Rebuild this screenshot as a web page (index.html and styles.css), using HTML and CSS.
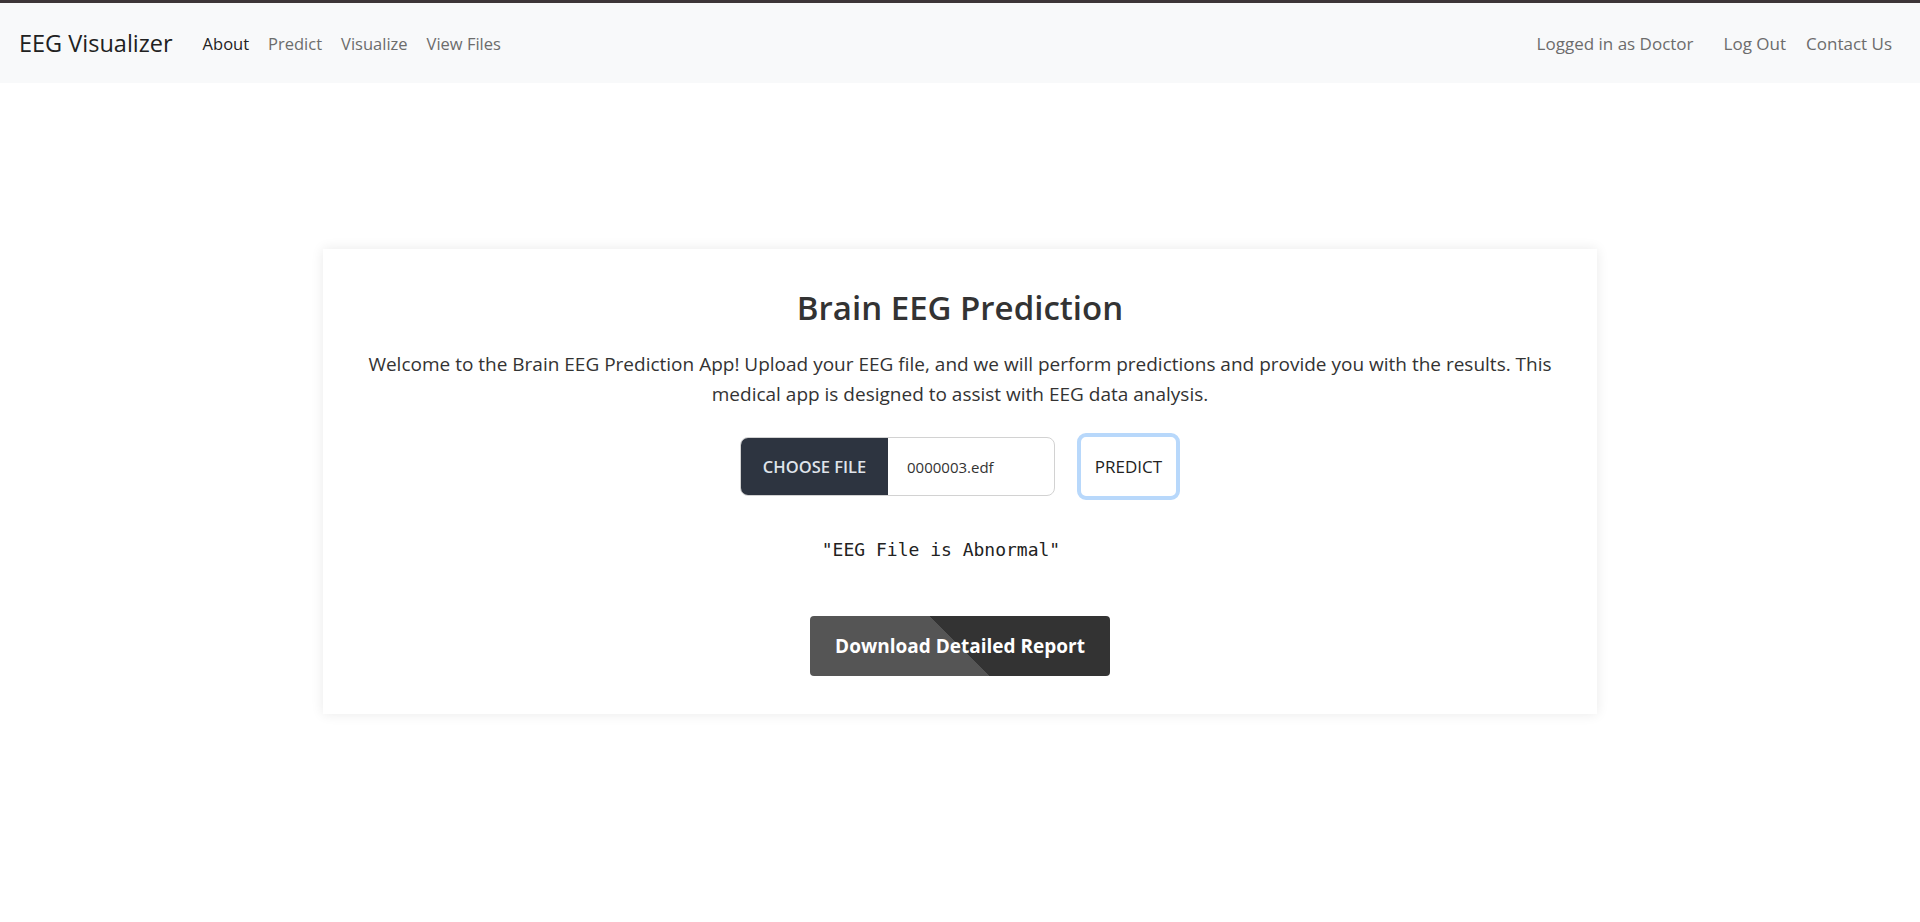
FILE: index.html
```html
<!DOCTYPE html>
<html lang="en">
<head>
<meta charset="utf-8">
<title>EEG Visualizer</title>
<link rel="stylesheet" href="styles.css">
</head>
<body>
<nav class="navbar">
  <div class="nav-left">
    <a class="brand" href="#">EEG Visualizer</a>
    <ul class="nav-links main-links">
      <li><a class="active" href="#">About</a></li>
      <li><a href="#">Predict</a></li>
      <li><a href="#">Visualize</a></li>
      <li><a href="#">View Files</a></li>
    </ul>
  </div>
  <ul class="nav-links nav-right">
    <li><span class="user">Logged in as Doctor</span></li>
    <li><a href="#">Log Out</a></li>
    <li><a href="#">Contact Us</a></li>
  </ul>
</nav>
<main class="main">
  <section class="card">
    <h2 class="title">Brain EEG Prediction</h2>
    <p class="intro">Welcome to the Brain EEG Prediction App! Upload your EEG file, and we will perform predictions and provide you with the results. This medical app is designed to assist with EEG data analysis.</p>
    <form class="upload-row">
      <div class="file-group">
        <span class="file-btn">CHOOSE FILE</span>
        <span class="file-name">0000003.edf</span>
      </div>
      <button type="button" class="predict-btn">PREDICT</button>
    </form>
    <pre class="result">"EEG File is Abnormal"</pre>
    <button type="button" class="download-btn">Download Detailed Report</button>
  </section>
</main>
</body>
</html>
```
FILE: styles.css
```css
* { box-sizing: border-box; }
html, body { margin: 0; padding: 0; }
body {
  font-family: "Segoe UI", "Open Sans", sans-serif;
  color: #333;
  background: #fff;
  border-top: 3px solid #3d3538;
  min-height: 922px;
}
a { text-decoration: none; }
.navbar {
  height: 80px;
  background: #f8f9fa;
  display: flex;
  align-items: center;
  justify-content: space-between;
  padding: 0 28px 0 19px;
}
.nav-left { display: flex; align-items: center; }
.brand {
  font-size: 23.5px;
  color: #212121;
  margin-right: 30px;
}
.nav-links {
  list-style: none;
  margin: 0;
  padding: 0;
  display: flex;
  align-items: center;
  gap: 20px;
  font-size: 17px;
}
.main-links { font-size: 16.5px; gap: 19px; }
.nav-links a, .nav-links .user { color: #6c6c6c; }
.nav-links a.active { color: #222; }
.nav-right .user { margin-right: 10px; }
.main { display: flex; justify-content: center; padding-top: 166px; }
.card {
  width: 1274px;
  background: #fff;
  box-shadow: 0 0 12px rgba(0,0,0,0.09);
  padding: 40px 20px 38px;
  display: flex;
  flex-direction: column;
  align-items: center;
  text-align: center;
}
.title {
  margin: 0;
  font-size: 33px;
  font-weight: 600;
  line-height: 38px;
  color: #333;
}
.intro {
  margin: 22px 0 0;
  font-size: 19px;
  line-height: 30px;
  color: #333;
}
.upload-row {
  margin-top: 24px;
  display: flex;
  align-items: center;
  gap: 22px;
}
.file-group {
  display: flex;
  height: 59px;
  width: 315px;
  border: 1px solid #d2d2d2;
  border-radius: 8px;
  overflow: hidden;
}
.file-btn {
  width: 147px;
  background: #2d3440;
  color: #dfe3ea;
  font-weight: 600;
  font-size: 16.5px;
  display: flex;
  align-items: center;
  justify-content: center;
}
.file-name {
  flex: 1;
  display: flex;
  align-items: center;
  padding-left: 19px;
  font-size: 15px;
  color: #333;
}
.predict-btn {
  width: 103px;
  height: 67px;
  border: 4px solid #b8d8fb;
  border-radius: 9px;
  background: #fff;
  font-family: inherit;
  font-size: 17px;
  font-weight: 500;
  color: #222;
  padding: 0;
}
.result {
  margin: 38px 0 0;
  padding-right: 38px;
  font-family: "DejaVu Sans Mono", monospace;
  font-size: 18px;
  line-height: 24px;
  color: #222;
}
.download-btn {
  margin-top: 54px;
  width: 300px;
  height: 60px;
  border: none;
  border-radius: 4px;
  background: linear-gradient(45deg, #555 50%, #333 50%);
  color: #fff;
  font-family: inherit;
  font-size: 19px;
  font-weight: 700;
  padding: 0;
}
```
